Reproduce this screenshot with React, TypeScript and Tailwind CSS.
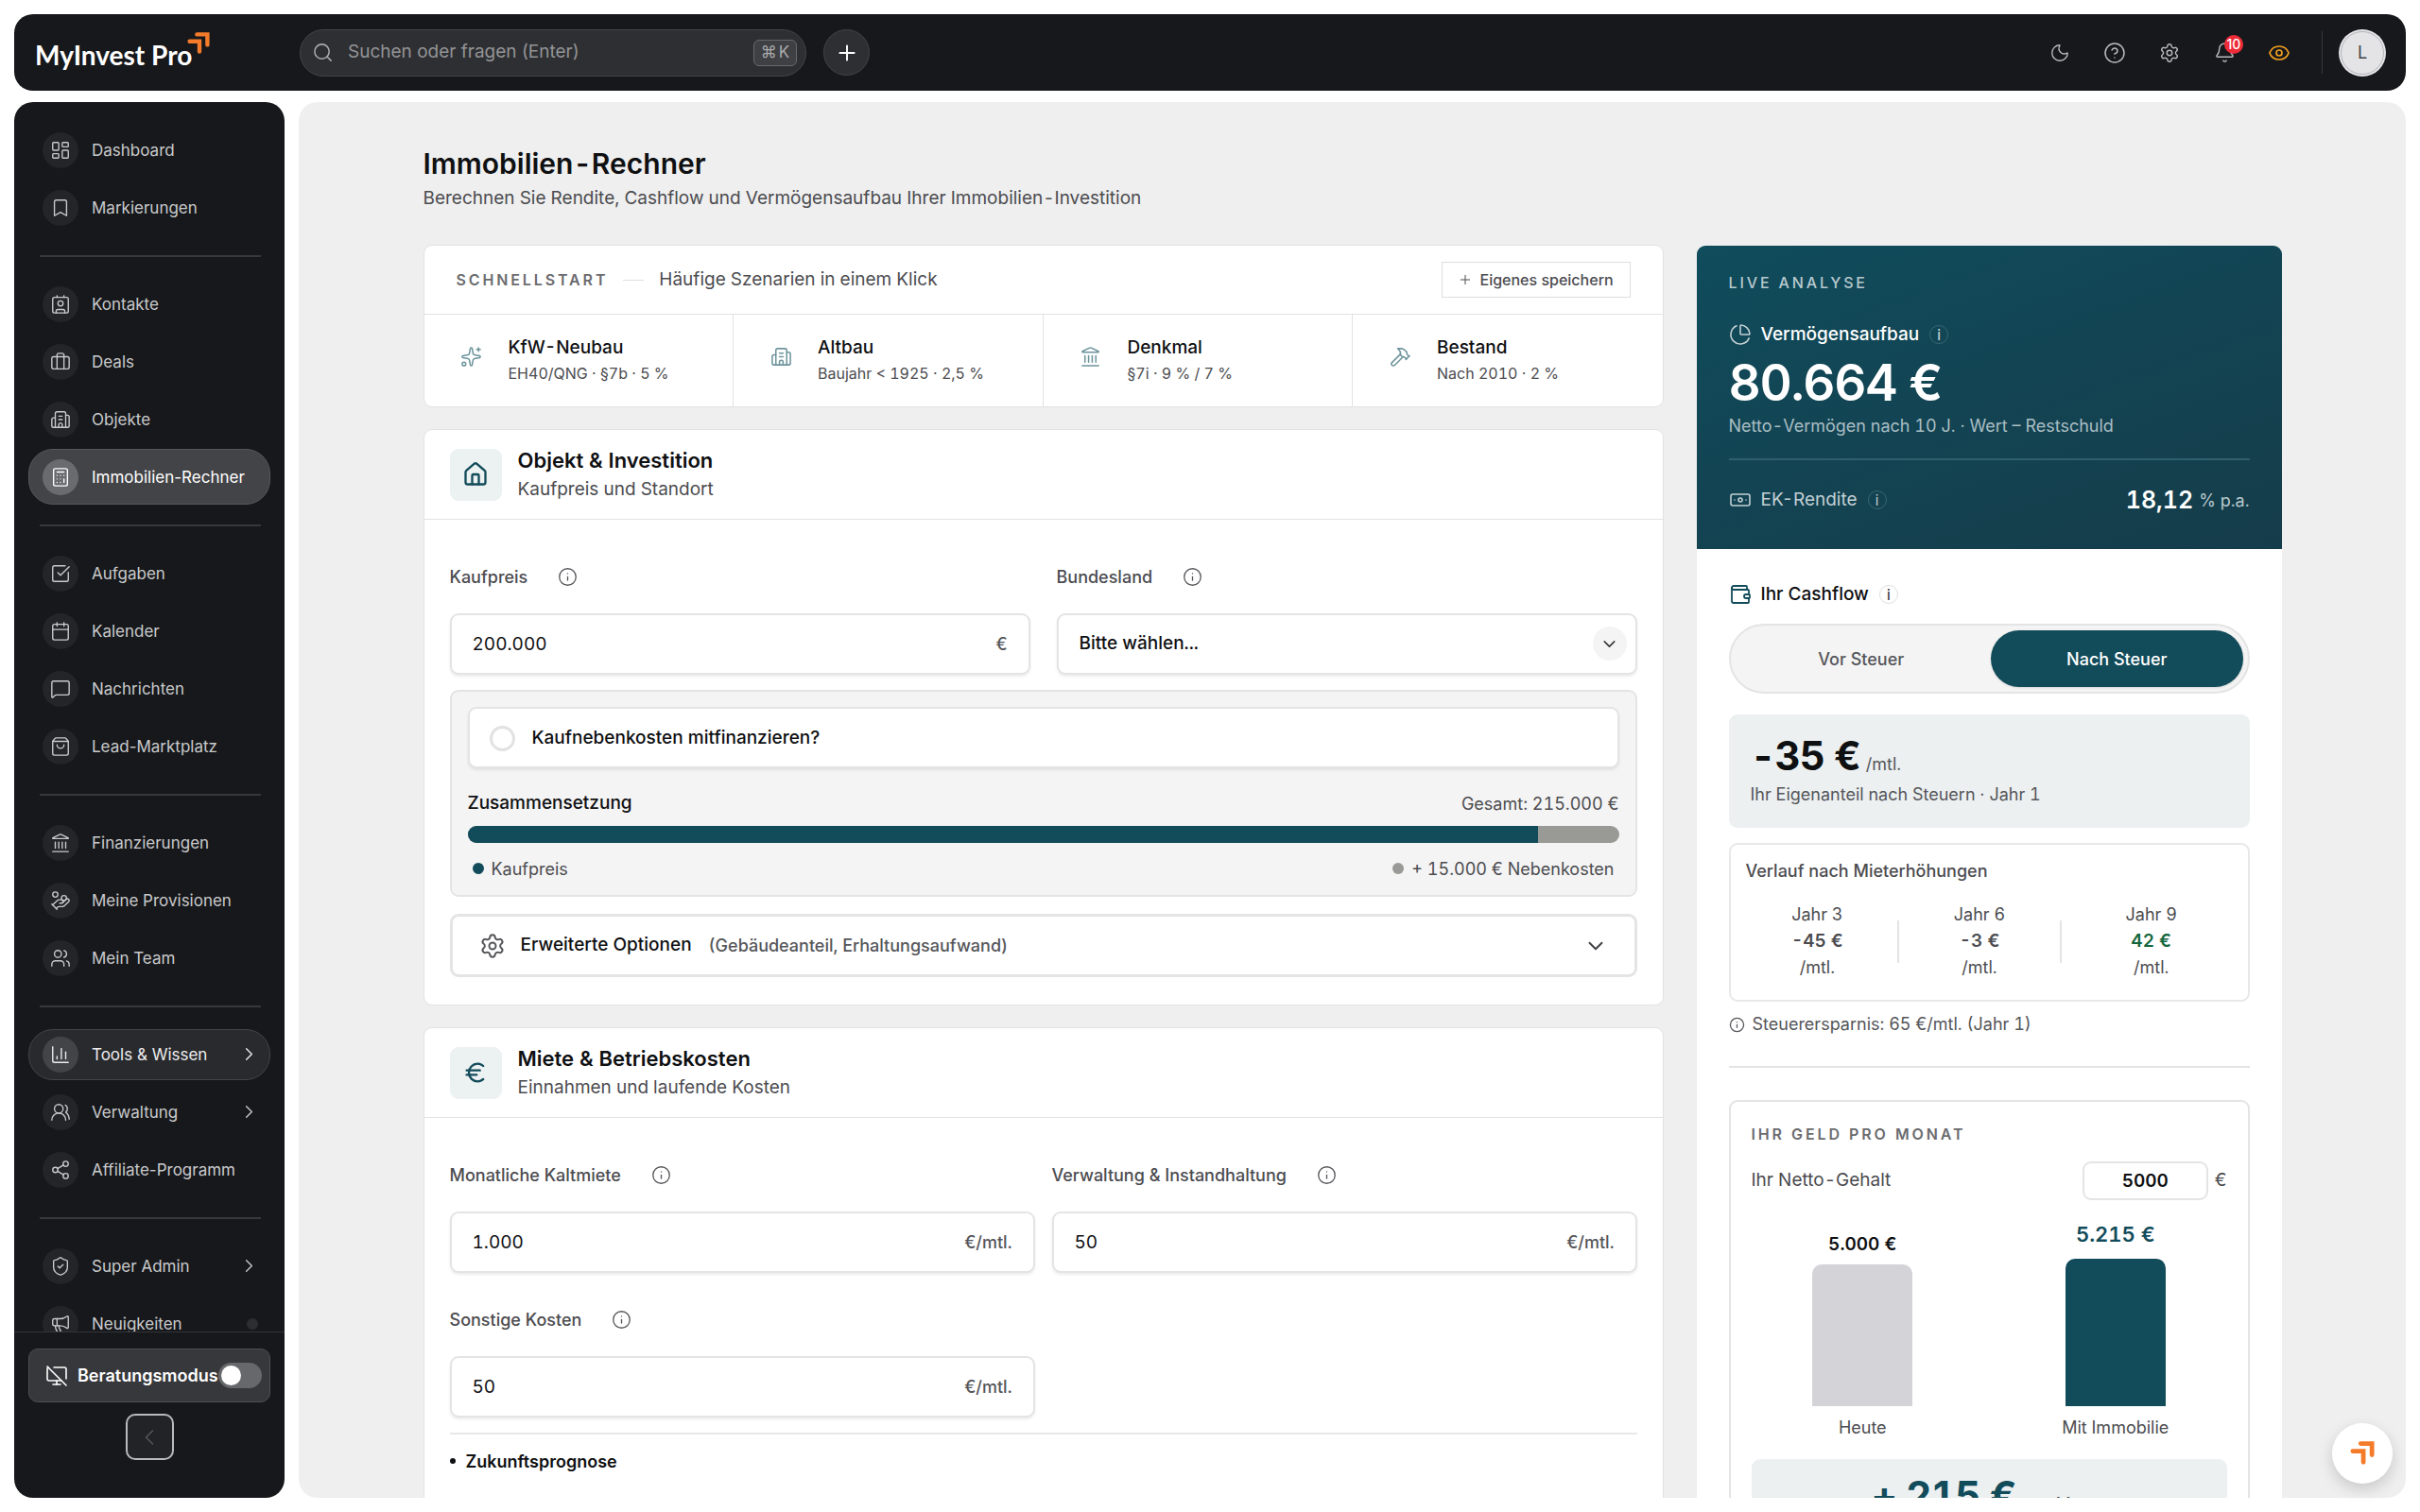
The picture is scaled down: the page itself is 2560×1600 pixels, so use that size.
import type { ComponentType, ReactNode } from "react";
import {
  Banknote,
  Bell,
  Bookmark,
  Briefcase,
  Building2,
  Calculator,
  Calendar,
  ChartColumn,
  ChartPie,
  ChevronDown,
  ChevronLeft,
  ChevronRight,
  CircleQuestionMark,
  Contact,
  Euro,
  Eye,
  Hammer,
  HandCoins,
  House,
  Info,
  Landmark,
  LayoutDashboard,
  Megaphone,
  MessageSquare,
  MonitorOff,
  Moon,
  Plus,
  Search,
  Settings,
  Share2,
  ShieldCheck,
  ShoppingBag,
  Sparkles,
  SquareCheckBig,
  Users,
  UsersRound,
  Wallet,
} from "lucide-react";

type Icon = ComponentType<{ className?: string; strokeWidth?: number }>;
type NavItem = { label: string; icon: Icon; state?: "active" | "open"; more?: boolean; dot?: boolean };

const NAV: NavItem[][] = [
  [
    { label: "Dashboard", icon: LayoutDashboard },
    { label: "Markierungen", icon: Bookmark },
  ],
  [
    { label: "Kontakte", icon: Contact },
    { label: "Deals", icon: Briefcase },
    { label: "Objekte", icon: Building2 },
    { label: "Immobilien-Rechner", icon: Calculator, state: "active" },
  ],
  [
    { label: "Aufgaben", icon: SquareCheckBig },
    { label: "Kalender", icon: Calendar },
    { label: "Nachrichten", icon: MessageSquare },
    { label: "Lead-Marktplatz", icon: ShoppingBag },
  ],
  [
    { label: "Finanzierungen", icon: Landmark },
    { label: "Meine Provisionen", icon: HandCoins },
    { label: "Mein Team", icon: Users },
  ],
  [
    { label: "Tools & Wissen", icon: ChartColumn, state: "open", more: true },
    { label: "Verwaltung", icon: UsersRound, more: true },
    { label: "Affiliate-Programm", icon: Share2 },
  ],
  [
    { label: "Super Admin", icon: ShieldCheck, more: true },
    { label: "Neuigkeiten", icon: Megaphone, dot: true },
  ],
];

function ArrowMark({ className }: { className?: string }) {
  return (
    <svg viewBox="0 0 24 24" className={className} fill="none" stroke="#f47b2a" strokeWidth="4.4" strokeLinecap="round" strokeLinejoin="miter" aria-hidden="true">
      <path d="M10.4 2.4H21.4V13.4" />
      <path d="M2.6 9.8H13V20.6" />
    </svg>
  );
}

function Header() {
  const icon = "flex size-[38px] items-center justify-center rounded-full text-[#b9babd]";
  return (
    <header className="flex h-[81px] shrink-0 items-center rounded-[20px] bg-[#17181b] pr-[21px] pl-[22px]">
      <a href="#start" className="relative w-[280px] pt-1 font-[Lato] text-[28px] leading-[40px] font-bold text-white">
        MyInvest Pro
        <ArrowMark className="absolute top-0 left-[161px] size-6" />
      </a>
      <div className="flex h-[50px] w-[536px] items-center rounded-full border border-[#434447] bg-[#2e2f32] pr-[9px] pl-3">
        <Search className="size-[23px] shrink-0 text-[#a9aaad]" strokeWidth={1.6} />
        <input
          aria-label="Suchen oder fragen"
          placeholder="Suchen oder fragen (Enter)"
          className="ml-[15px] min-w-0 flex-1 bg-transparent text-[19px] text-white outline-none placeholder:text-[#939497]"
        />
        <kbd className="flex h-7 w-[46px] items-center justify-center gap-0.5 rounded-md border border-[#68696c] bg-[#3f4043] font-[Inter] text-[17px] text-[#a9aaad]">
          <span>⌘</span>
          <span>K</span>
        </kbd>
      </div>
      <button aria-label="Neu" className="ml-[18px] flex size-[49px] items-center justify-center rounded-full border border-[#434447] bg-[#2e2f32] text-white">
        <Plus className="size-[26px]" strokeWidth={1.8} />
      </button>
      <div className="ml-auto flex items-center gap-5">
        <button aria-label="Dunkelmodus" className={icon}>
          <Moon className="size-[22px]" strokeWidth={1.5} />
        </button>
        <button aria-label="Hilfe" className={icon}>
          <CircleQuestionMark className="size-6" strokeWidth={1.5} />
        </button>
        <button aria-label="Einstellungen" className={icon}>
          <Settings className="size-[22px]" strokeWidth={1.6} />
        </button>
        <button aria-label="Benachrichtigungen" className={`relative ${icon}`}>
          <Bell className="size-[23px]" strokeWidth={1.5} />
          <span className="absolute top-0 left-[19px] flex size-5 items-center justify-center rounded-full bg-[#ee2b38] text-[14px] leading-none font-medium text-white">
            10
          </span>
        </button>
        <button aria-label="Ansicht" className={icon}>
          <Eye className="size-6 text-[#f0a020]" strokeWidth={1.7} />
        </button>
      </div>
      <div className="mr-[17px] ml-[26px] h-[45px] w-px bg-[#37383b]" />
      <button aria-label="Konto" className="flex size-[50px] items-center justify-center rounded-full bg-[#e4e4e7] p-[2px]">
        <span className="flex size-full items-center justify-center rounded-full border border-[#b4b4b8] text-[18px] text-[#3f3f46]">L</span>
      </button>
    </header>
  );
}

function NavRow({ item }: { item: NavItem }) {
  const ItemIcon = item.icon;
  const row =
    item.state === "active"
      ? "h-[59px] border-[#56575a] bg-[#434447] text-white rounded-[26px]"
      : item.state === "open"
        ? "h-[54px] border-[#434447] bg-[#292a2d] text-[#ececee] rounded-[26px]"
        : "h-[54px] border-transparent text-[#c9cacc]";
  const circle = item.state === "active" ? "bg-[#6a6b6e]" : item.state === "open" ? "bg-[#434447]" : "bg-[#242528]";
  return (
    <li className="flex h-[61px] items-center">
      <a href="#nav" className={`flex w-full items-center border pr-[10px] pl-[14px] ${row}`}>
        <span className={`mr-[14px] flex size-[38px] shrink-0 items-center justify-center rounded-full ${circle}`}>
          <ItemIcon className="size-[22px]" strokeWidth={1.5} />
        </span>
        <span className="text-[17px] leading-6">{item.label}</span>
        {item.more && <ChevronRight className="ml-auto size-[23px]" strokeWidth={1.4} />}
        {item.dot && <span className="mr-[2px] ml-auto size-3 rounded-full bg-[#2d2e31]" />}
      </a>
    </li>
  );
}

function Sidebar() {
  return (
    <aside className="flex w-[286px] shrink-0 flex-col overflow-hidden rounded-[20px] bg-[#17181b]">
      <nav aria-label="Hauptmenü" className="min-h-0 flex-1 overflow-hidden px-[15px] pt-5">
        {NAV.map((group, i) => (
          <ul key={i} className={i > 0 ? "relative mt-[41px] before:absolute before:-top-[21px] before:right-[10px] before:left-3 before:h-[2px] before:bg-[#37383b]" : ""}>
            {group.map((item) => (
              <NavRow key={item.label} item={item} />
            ))}
          </ul>
        ))}
      </nav>
      <div className="flex shrink-0 flex-col items-center border-t border-[#333437] px-[15px] pt-[17px] pb-[40px]">
        <label className="flex h-[57px] w-full items-center rounded-[10px] border border-[#4d4e51] bg-[#37383b] pr-[10px] pl-[17px] text-white">
          <MonitorOff className="mr-[10px] size-6 shrink-0" strokeWidth={1.6} />
          <span className="text-[18px] font-semibold">Beratungsmodus</span>
          <input
            type="checkbox"
            className="h-[27px] w-[46px] shrink-0 appearance-none rounded-full bg-[#67686b] before:m-[3px] before:block before:size-[21px] before:rounded-full before:bg-white"
          />
        </label>
        <button aria-label="Menü einklappen" className="mt-3 flex h-[49px] w-[51px] items-center justify-center rounded-[10px] border-2 border-[#b9babd] bg-[#222326] text-[#55565a]">
          <ChevronLeft className="size-7" strokeWidth={1.3} />
        </button>
      </div>
    </aside>
  );
}

const PRESETS: { title: string; sub: string; icon: Icon }[] = [
  { title: "KfW-Neubau", sub: "EH40/QNG · §7b · 5 %", icon: Sparkles },
  { title: "Altbau", sub: "Baujahr < 1925 · 2,5 %", icon: Building2 },
  { title: "Denkmal", sub: "§7i · 9 % / 7 %", icon: Landmark },
  { title: "Bestand", sub: "Nach 2010 · 2 %", icon: Hammer },
];

function Presets() {
  return (
    <section className="overflow-hidden rounded-[9px] border border-[#e2e2e2] bg-white">
      <div className="flex h-[73px] items-center border-b border-[#e2e2e2] px-[34px]">
        <h2 className="text-[16px] font-semibold tracking-[0.18em] text-[#6b6b6e]">SCHNELLSTART</h2>
        <span className="mx-4 h-px w-[22px] bg-[#dedede]" />
        <p className="text-[19px] text-[#4c4c50]">Häufige Szenarien in einem Klick</p>
        <button className="ml-auto flex h-[38px] w-[200px] items-center gap-2 border border-[#dedede] pl-4 text-[16px] font-medium text-[#4c4c50]">
          <Plus className="size-4" strokeWidth={1.5} />
          Eigenes speichern
        </button>
      </div>
      <div className="grid grid-cols-4 divide-x divide-[#e2e2e2]">
        {PRESETS.map((p) => (
          <button key={p.title} className="flex h-[97px] items-center pl-[34px] text-left">
            <span className="mr-[23px] mb-2 flex size-8 items-center justify-center text-[#6d949c]">
              <p.icon className="size-[23px]" strokeWidth={1.6} />
            </span>
            <span className="flex flex-col gap-px">
              <span className="text-[19px] leading-[27px] font-medium text-[#0f1012]">{p.title}</span>
              <span className="text-[16px] leading-[27px] text-[#4c4c50]">{p.sub}</span>
            </span>
          </button>
        ))}
      </div>
    </section>
  );
}

function Section({ icon: SectionIcon, title, sub, children }: { icon: Icon; title: string; sub: string; children: ReactNode }) {
  return (
    <section className="rounded-[9px] border border-[#e2e2e2] bg-white">
      <div className="flex h-[95px] items-center gap-[17px] border-b border-[#e2e2e2] px-[27px]">
        <span className="flex size-[55px] shrink-0 items-center justify-center rounded-[9px] bg-[#ecf1f1] text-[#124b5a]">
          <SectionIcon className="size-7" strokeWidth={2} />
        </span>
        <div>
          <h2 className="text-[22px] leading-[30px] font-semibold text-[#0f1012]">{title}</h2>
          <p className="mt-0.5 text-[19px] leading-7 text-[#4c4c50]">{sub}</p>
        </div>
      </div>
      <div className="px-[27px] pt-[42px] pb-[29px]">{children}</div>
    </section>
  );
}

const FIELD = "h-[65px] w-full rounded-[9px] border-2 border-[#e4e4e4] bg-white shadow-[0_2px_3px_rgba(0,0,0,0.08)] text-[#0f1012]";

function Label({ htmlFor, children }: { htmlFor: string; children: ReactNode }) {
  return (
    <div className="mb-[21px] flex h-9 items-center gap-8">
      <label htmlFor={htmlFor} className="text-[18px] font-medium text-[#4c4c50]">
        {children}
      </label>
      <button aria-label="Information">
        <Info className="size-[21px] text-[#55565a]" strokeWidth={1.5} />
      </button>
    </div>
  );
}

function NumberField({ id, label, value, unit }: { id: string; label: string; value: string; unit: string }) {
  return (
    <div>
      <Label htmlFor={id}>{label}</Label>
      <div className={`flex items-center px-[22px] ${FIELD}`}>
        <input id={id} defaultValue={value} className="min-w-0 flex-1 bg-transparent pt-0.5 text-[19px] outline-none" />
        <span className="text-[18px] font-medium text-[#55565a]">{unit}</span>
      </div>
    </div>
  );
}

function ObjectSection() {
  return (
    <Section icon={House} title="Objekt & Investition" sub="Kaufpreis und Standort">
      <div className="grid grid-cols-2 gap-7">
        <NumberField id="kaufpreis" label="Kaufpreis" value="200.000" unit="€" />
        <div>
          <Label htmlFor="bundesland">Bundesland</Label>
          <div className="relative">
            <select id="bundesland" className={`appearance-none pr-16 pl-[22px] text-[19px] font-medium ${FIELD}`}>
              <option>Bitte wählen...</option>
            </select>
            <span className="pointer-events-none absolute top-[14px] right-[11px] flex size-9 items-center justify-center rounded-full bg-[#f4f4f4]">
              <ChevronDown className="size-[21px] text-[#2f3033]" strokeWidth={1.7} />
            </span>
          </div>
        </div>
      </div>
      <div className="mt-4 rounded-[9px] border-2 border-[#e4e4e4] bg-[#f4f4f4] px-[17px] pt-4 pb-[14px]">
        <label className={`flex items-center gap-[18px] px-[21px] pt-0.5 text-[19px] font-medium ${FIELD}`}>
          <input type="checkbox" className="size-[27px] appearance-none rounded-full border-3 border-[#e2e2e2] bg-white" />
          Kaufnebenkosten mitfinanzieren?
        </label>
        <div className="mt-[23px] flex h-7 items-center justify-between">
          <h3 className="text-[19px] font-medium text-[#0f1012]">Zusammensetzung</h3>
          <span className="text-[18px] text-[#4c4c50]">Gesamt: 215.000 €</span>
        </div>
        <div className="mt-[10px] flex h-[18px] overflow-hidden rounded-[9px] bg-[#999a95]">
          <div className="w-[93%] bg-[#124b5a]" />
        </div>
        <div className="mt-[13px] flex h-7 items-center justify-between px-[5px] text-[18px] text-[#4c4c50]">
          <span className="flex items-center gap-2">
            <span className="size-3 rounded-full bg-[#124b5a]" />
            Kaufpreis
          </span>
          <span className="flex items-center gap-2">
            <span className="size-3 rounded-full bg-[#999a95]" />+ 15.000 € Nebenkosten
          </span>
        </div>
      </div>
      <button className="mt-[18px] flex h-[67px] w-full items-center rounded-[9px] border-3 border-[#e4e4e4] pr-7 pl-7">
        <Settings className="mr-4 size-7 text-[#55565a]" strokeWidth={1.7} />
        <span className="text-[19px] font-medium text-[#0f1012]">Erweiterte Optionen</span>
        <span className="ml-[18px] text-[18px] font-medium text-[#55565a]">(Gebäudeanteil, Erhaltungsaufwand)</span>
        <ChevronDown className="ml-auto size-[26px] text-[#3f4043]" strokeWidth={1.8} />
      </button>
    </Section>
  );
}

function RentSection() {
  return (
    <Section icon={Euro} title="Miete & Betriebskosten" sub="Einnahmen und laufende Kosten">
      <div className="grid grid-cols-2 gap-x-[18px] gap-y-[31px]">
        <NumberField id="kaltmiete" label="Monatliche Kaltmiete" value="1.000" unit="€/mtl." />
        <NumberField id="verwaltung" label="Verwaltung & Instandhaltung" value="50" unit="€/mtl." />
        <NumberField id="sonstige" label="Sonstige Kosten" value="50" unit="€/mtl." />
      </div>
      <div className="mt-4 border-t-2 border-[#e8e8e8] pt-3">
        <h3 className="flex h-8 items-center gap-[11px] text-[18px] font-semibold text-[#0f1012]">
          <span className="size-[6px] rounded-full bg-[#0f1012]" />
          Zukunftsprognose
        </h3>
      </div>
      <div className="h-40" />
    </Section>
  );
}

function InfoDot({ dark }: { dark?: boolean }) {
  return (
    <button
      aria-label="Information"
      className={`ml-[11px] flex size-5 items-center justify-center rounded-full border text-[15px] leading-none ${dark ? "border-[#376672] text-[#c2d0d4]" : "border-[#dedede] text-[#3f4043]"}`}
    >
      i
    </button>
  );
}

const YEARS = [
  { year: "Jahr 3", value: "-45 €", tone: "text-[#4c4c50]" },
  { year: "Jahr 6", value: "-3 €", tone: "text-[#4c4c50]" },
  { year: "Jahr 9", value: "42 €", tone: "text-[#14663c]" },
];

function Analysis() {
  return (
    <aside className="mt-px w-[619px] shrink-0 overflow-hidden rounded-t-[9px] bg-white">
      <div className="h-[321px] bg-linear-160 from-[#0f4c5c] to-[#153c4a] px-[34px] pt-[25px]">
        <h2 className="text-[16px] leading-7 font-medium tracking-[0.18em] text-[#b7c9ce]">LIVE ANALYSE</h2>
        <div className="mt-[27px] flex h-7 items-center text-[19px] font-medium text-white">
          <ChartPie className="mr-[10px] size-6 text-[#c2d0d4]" strokeWidth={1.6} />
          Vermögensaufbau
          <InfoDot dark />
        </div>
        <p className="mt-[3px] text-[53px] leading-[68px] font-semibold tracking-tight text-white">80.664 €</p>
        <p className="text-[18px] leading-6 text-[#a9bec4]">Netto-Vermögen nach 10 J. · Wert – Restschuld</p>
        <div className="mt-[22px] flex items-center border-t-2 border-[#2f5f6c] pt-[22px]">
          <Banknote className="mr-[10px] size-6 text-[#c2d0d4]" strokeWidth={1.6} />
          <span className="text-[19px] text-[#c2d0d4]">EK-Rendite</span>
          <InfoDot dark />
          <span className="ml-auto text-[25px] leading-10 font-semibold text-white">18,12</span>
          <span className="ml-[6px] text-[18px] text-[#b7c9ce]">% p.a.</span>
        </div>
      </div>
      <div className="px-[34px] pt-[34px]">
        <div className="flex h-7 items-center text-[19px] font-medium text-[#0f1012]">
          <Wallet className="mr-[10px] size-6 text-[#124b5a]" strokeWidth={1.8} />
          Ihr Cashflow
          <InfoDot />
        </div>
        <div className="mt-[17px] grid h-[74px] grid-cols-2 gap-1 rounded-full border-2 border-[#e4e4e4] bg-[#f4f4f4] p-[5px] text-[18px] font-medium">
          <button className="rounded-full text-[#55565a]">Vor Steuer</button>
          <button className="rounded-full bg-[#124b5a] text-white shadow-sm">Nach Steuer</button>
        </div>
        <div className="mt-[22px] h-[120px] rounded-[9px] bg-[#ecf0f1] px-[23px] pt-[17px]">
          <p className="flex h-[54px] items-baseline gap-[6px] leading-[54px]">
            <span className="text-[42px] font-bold tracking-tight text-[#0f1012]">-35 €</span>
            <span className="text-[18px] text-[#55565a]">/mtl.</span>
          </p>
          <p className="text-[18px] leading-7 text-[#55565a]">Ihr Eigenanteil nach Steuern · Jahr 1</p>
        </div>
        <div className="mt-4 h-[168px] rounded-[9px] border-2 border-[#e8e8e8] px-4 pt-[14px]">
          <h3 className="text-[18px] leading-7 font-medium text-[#4c4c50]">Verlauf nach Mieterhöhungen</h3>
          <div className="mt-[18px] grid grid-cols-3 text-center text-[18px] leading-7 text-[#4c4c50]">
            {YEARS.map((y, i) => (
              <div key={y.year} className="flex items-center">
                <p className="flex flex-1 flex-col">
                  <span>{y.year}</span>
                  <span className={`text-[19px] font-semibold ${y.tone}`}>{y.value}</span>
                  <span>/mtl.</span>
                </p>
                {i < 2 && <span className="mx-[9px] h-[45px] w-[2px] bg-[#e4e4e4]" />}
              </div>
            ))}
          </div>
        </div>
        <p className="mt-[10px] flex items-center gap-2 text-[18px] leading-7 text-[#55565a]">
          <Info className="size-[17px]" strokeWidth={1.8} />
          Steuerersparnis: 65 €/mtl. (Jahr 1)
        </p>
        <div className="mt-[30px] border-t-2 border-[#e4e4e4] pt-[34px]">
          <div className="rounded-[9px] border-2 border-[#e4e4e4] px-[22px] pt-5">
            <h3 className="text-[16px] leading-7 font-semibold tracking-[0.18em] text-[#6b6b6e]">IHR GELD PRO MONAT</h3>
            <div className="mt-[15px] flex h-[41px] items-center text-[19px] text-[#4c4c50]">
              <label htmlFor="gehalt" className="mr-auto">
                Ihr Netto-Gehalt
              </label>
              <input id="gehalt" defaultValue="5000" className="h-[41px] w-[133px] rounded-[9px] border-2 border-[#e4e4e4] text-center font-semibold text-[#0f1012] outline-none" />
              <span className="ml-[7px]">€</span>
            </div>
            <div className="mt-5 grid h-[234px] grid-cols-2 gap-8 text-[18px] text-[#4c4c50]">
              <div className="flex flex-col items-center justify-end">
                <span className="text-[19px] font-semibold text-[#0f1012]">5.000 €</span>
                <span className="mt-[7px] h-[150px] w-[106px] rounded-t-[10px] bg-[#d4d4d8]" />
                <span className="mt-[9px]">Heute</span>
              </div>
              <div className="flex flex-col items-center justify-end">
                <span className="text-[22px] font-semibold text-[#124b5a]">5.215 €</span>
                <span className="mt-[9px] h-[156px] w-[106px] rounded-t-[10px] bg-[#124b5a]" />
                <span className="mt-[9px]">Mit Immobilie</span>
              </div>
            </div>
            <p className="mt-5 flex h-32 items-baseline justify-center gap-[9px] rounded-[9px] bg-[#ecf0f1] pt-3 text-[#124b5a]">
              <span className="text-[42px] leading-[54px] font-bold tracking-tight">+ 215 €</span>
              <span className="text-[18px] text-[#4c4c50]">pro Monat</span>
            </p>
          </div>
        </div>
      </div>
    </aside>
  );
}

export default function App() {
  return (
    <div className="relative flex h-screen flex-col gap-3 overflow-hidden bg-white p-[15px] font-[Inter,sans-serif]">
      <Header />
      <div className="flex min-h-0 flex-1 gap-[15px]">
        <Sidebar />
        <main className="min-w-0 flex-1 overflow-hidden rounded-[20px] bg-[#efefef] px-10 pt-[47px] tabular-nums">
          <div className="mx-auto max-w-[1966px]">
            <h1 className="text-[30px] leading-9 font-semibold text-[#0f1012]">Immobilien-Rechner</h1>
            <p className="mt-[5px] text-[19px] leading-7 text-[#4c4c50]">Berechnen Sie Rendite, Cashflow und Vermögensaufbau Ihrer Immobilien-Investition</p>
            <div className="mt-[35px] flex items-start gap-[35px]">
              <div className="flex min-w-0 flex-1 flex-col gap-[23px]">
                <Presets />
                <ObjectSection />
                <RentSection />
              </div>
              <Analysis />
            </div>
          </div>
        </main>
      </div>
      <button
        aria-label="Assistent"
        className="fixed right-[29px] bottom-[30px] flex size-16 items-center justify-center rounded-full bg-white shadow-[0_6px_16px_rgba(0,0,0,0.16)]"
      >
        <ArrowMark className="size-[26px]" />
      </button>
    </div>
  );
}
